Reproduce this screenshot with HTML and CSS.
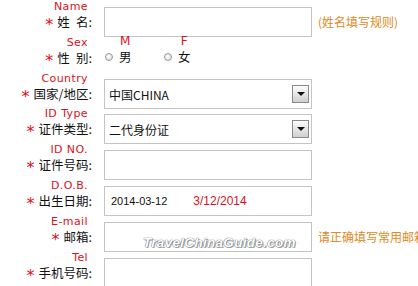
FILE: index.html
```html
<!DOCTYPE html>
<html lang="zh">
<head>
    <meta charset="UTF-8">
    <meta name="viewport" content="width=device-width, initial-scale=1.0">
    <title>Booking Form</title>
    <link rel="stylesheet" href="styles.css">
</head>
<body>
    <div class="form">
        <div class="row">
            <div class="label"><span class="en">Name</span><span class="cn"><span class="req">*</span>姓&ensp;名:</span></div>
            <div class="field"><div class="box"></div></div>
            <div class="hint">(姓名填写规则)</div>
        </div>

        <div class="row">
            <div class="label"><span class="en">Sex</span><span class="cn"><span class="req">*</span>性&ensp;别:</span></div>
            <div class="field radios">
                <div class="option"><span class="radio"></span><span class="opt-text"><span class="opt-en">M</span><span class="opt-cn">男</span></span></div>
                <div class="option"><span class="radio"></span><span class="opt-text"><span class="opt-en">F</span><span class="opt-cn">女</span></span></div>
            </div>
        </div>

        <div class="row short">
            <div class="label"><span class="en">Country</span><span class="cn"><span class="req">*</span>国家/地区:</span></div>
            <div class="field"><div class="box select"><span>中国CHINA</span><span class="arrow"></span></div></div>
        </div>

        <div class="row">
            <div class="label"><span class="en">ID Type</span><span class="cn"><span class="req">*</span>证件类型:</span></div>
            <div class="field"><div class="box select"><span>二代身份证</span><span class="arrow"></span></div></div>
        </div>

        <div class="row">
            <div class="label"><span class="en">ID NO.</span><span class="cn"><span class="req">*</span>证件号码:</span></div>
            <div class="field"><div class="box"></div></div>
        </div>

        <div class="row">
            <div class="label"><span class="en">D.O.B.</span><span class="cn"><span class="req">*</span>出生日期:</span></div>
            <div class="field"><div class="box date"><span>2014-03-12</span><span class="date-en">3/12/2014</span></div></div>
        </div>

        <div class="row">
            <div class="label"><span class="en">E-mail</span><span class="cn"><span class="req">*</span>邮箱:</span></div>
            <div class="field"><div class="box"></div></div>
            <div class="hint">请正确填写常用邮箱</div>
        </div>

        <div class="row">
            <div class="label"><span class="en">Tel</span><span class="cn"><span class="req">*</span>手机号码:</span></div>
            <div class="field"><div class="box"></div></div>
        </div>
    </div>

    <div class="watermark">TravelChinaGuide.com</div>
</body>
</html>
```

FILE: styles.css
```css
body {
    margin: 0;
    background: #fff;
    font-family: "Noto Sans CJK SC", sans-serif;
    font-size: 12px;
    color: #111;
    overflow: hidden;
}
.form {
    padding-top: 7px;
}
.row {
    display: grid;
    grid-template-columns: 104px 208px 1fr;
    height: 36px;
}
.row.short {
    height: 35px;
}
.label {
    display: flex;
    flex-direction: column;
    align-items: flex-end;
    padding-right: 12px;
    margin-top: -6px;
}
.en {
    font-family: "DejaVu Sans", sans-serif;
    font-size: 11px;
    line-height: 12px;
    letter-spacing: 0.4px;
    color: #d8121c;
    padding-right: 4px;
}
.cn {
    font-size: 12.5px;
    line-height: 17px;
    white-space: nowrap;
}
.req {
    display: inline-block;
    color: #d8121c;
    font-family: "DejaVu Sans", sans-serif;
    font-size: 16px;
    line-height: 10px;
    margin-right: 4px;
    vertical-align: -3px;
}
.box {
    box-sizing: border-box;
    height: 30px;
    border: 1px solid #c4c4c4;
    background: #fff;
    display: flex;
    align-items: center;
    padding-left: 4px;
}
.select {
    justify-content: space-between;
    padding-right: 2px;
}
.arrow {
    box-sizing: border-box;
    width: 17px;
    height: 18px;
    border: 1px solid #8a8a8a;
    background: linear-gradient(#fdfdfd, #cfcfcf);
    position: relative;
}
.arrow::after {
    content: "";
    position: absolute;
    left: 4px;
    top: 6px;
    border-left: 4px solid transparent;
    border-right: 4px solid transparent;
    border-top: 4px solid #111;
}
.date {
    font-family: "Liberation Sans", sans-serif;
    font-size: 11px;
    padding-left: 6px;
}
.date-en {
    color: #d8121c;
    margin-left: 26px;
    font-size: 12px;
}
.hint {
    color: #e0891c;
    font-size: 12px;
    line-height: 30px;
    padding-left: 6px;
    white-space: nowrap;
}
.radios {
    display: flex;
    align-items: flex-start;
}
.option {
    display: flex;
    align-items: flex-end;
    width: 58px;
    margin-left: 1px;
    margin-top: -7px;
}
.radio {
    box-sizing: border-box;
    width: 8px;
    height: 8px;
    border-radius: 50%;
    border: 1px solid #9a9a9a;
    background: radial-gradient(circle at 40% 40%, #fff, #d6d6d6);
    margin-bottom: 4px;
}
.opt-text {
    display: flex;
    flex-direction: column;
    align-items: center;
    margin-left: 6px;
}
.opt-en {
    font-family: "DejaVu Sans", sans-serif;
    font-size: 12px;
    line-height: 11px;
    color: #d8121c;
}
.opt-cn {
    font-size: 12.5px;
    line-height: 16px;
    margin-top: 2px;
}
.watermark {
    position: absolute;
    left: 143px;
    top: 235px;
    font-family: "Liberation Sans", sans-serif;
    font-size: 13.5px;
    font-weight: bold;
    font-style: italic;
    letter-spacing: 0.3px;
    color: #fff;
    text-shadow: 0 0 1px #666, 0 0 1px #666, 1px 1px 0 #aaa;
}
```
